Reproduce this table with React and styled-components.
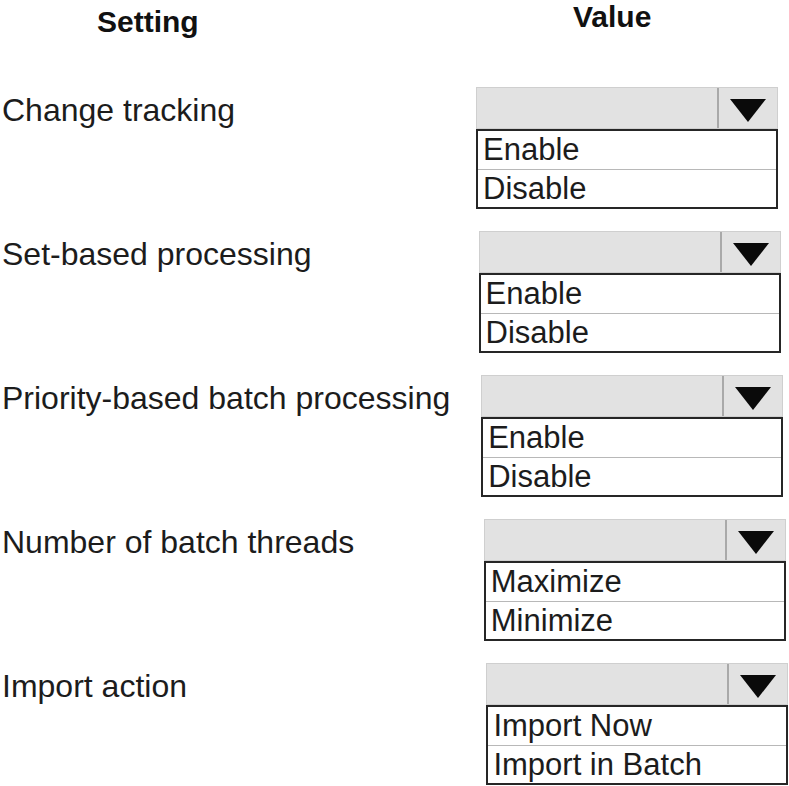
import React from "react";
import styled, { createGlobalStyle } from "styled-components";

const GlobalStyle = createGlobalStyle`
	body {
		margin: 0;
		background: #ffffff;
		font-family: "Liberation Sans", Arial, sans-serif;
		color: #1c1c1c;
	}
`;

const settings = [
	{ label: "Change tracking", options: ["Enable", "Disable"] },
	{ label: "Set-based processing", options: ["Enable", "Disable"] },
	{ label: "Priority-based batch processing", options: ["Enable", "Disable"] },
	{ label: "Number of batch threads", options: ["Maximize", "Minimize"] },
	{ label: "Import action", options: ["Import Now", "Import in Batch"] },
];

const App = () => {
	return (
		<>
			<GlobalStyle />
			<Page>
				<Header>
					<HeadCell $left={97} $top={7}>Setting</HeadCell>
					<HeadCell $left={573} $top={2}>Value</HeadCell>
				</Header>
				{settings.map((item, index) => (
					<Row key={item.label}>
						<Label>{item.label}</Label>
						<Select $shift={index * 2.6}>
							<SelectBar>
								<ArrowBox>
									<Arrow />
								</ArrowBox>
							</SelectBar>
							<OptionList>
								{item.options.map((opt) => (
									<Option key={opt}>{opt}</Option>
								))}
							</OptionList>
						</Select>
					</Row>
				))}
			</Page>
		</>
	);
};

export default App;

const Page = styled.div`
	width: 789px;
	height: 786px;
	overflow: hidden;
`;

const Header = styled.div`
	position: relative;
	height: 87px;
`;

const HeadCell = styled.div`
	position: absolute;
	left: ${(p) => p.$left}px;
	top: ${(p) => p.$top}px;
	font-size: 30px;
	line-height: 30px;
	font-weight: 700;
	color: #111;
`;

const Row = styled.div`
	display: flex;
	align-items: flex-start;
	height: 144px;
`;

const Label = styled.div`
	flex: 0 0 474px;
	padding-left: 2px;
	padding-top: 2px;
	font-size: 32px;
	line-height: 42px;
	white-space: nowrap;
`;

const Select = styled.div`
	width: 302px;
	margin-left: ${(p) => p.$shift}px;
	display: flex;
	flex-direction: column;
`;

const SelectBar = styled.div`
	height: 42px;
	box-sizing: border-box;
	background: #e2e2e2;
	border: 1px solid #cfcfcf;
	display: flex;
	justify-content: flex-end;
`;

const ArrowBox = styled.div`
	width: 58px;
	border-left: 2px solid #a9a9a9;
	display: flex;
	align-items: center;
	justify-content: center;
`;

const Arrow = styled.div`
	width: 0;
	height: 0;
	border-left: 18px solid transparent;
	border-right: 18px solid transparent;
	border-top: 23px solid #0a0a0a;
	margin-top: 4px;
`;

const OptionList = styled.div`
	border: 2px solid #262626;
	background: #ffffff;
`;

const Option = styled.div`
	height: 38px;
	box-sizing: border-box;
	padding-left: 5px;
	font-size: 31px;
	line-height: 38px;
	white-space: nowrap;

	& + & {
		border-top: 1px solid #b8b8b8;
	}
`;
